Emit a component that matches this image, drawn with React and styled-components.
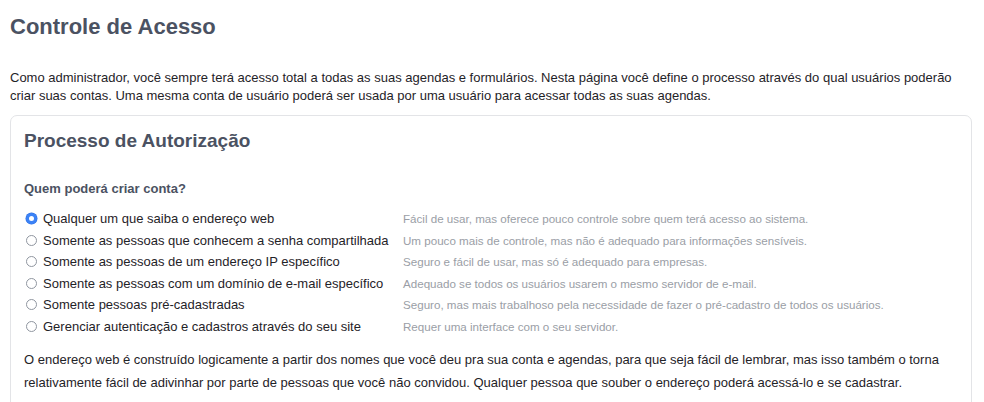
import React from "react";
import styled, { createGlobalStyle } from "styled-components";

const Global = createGlobalStyle`
  html, body { margin: 0; padding: 0; background: #fff; }
  body {
    font-family: "Liberation Sans", Arial, sans-serif;
    color: #1f2328;
    -webkit-font-smoothing: antialiased;
  }
`;

const Page = styled.div`
  padding: 10px 10px 0 10px;
`;

const Title = styled.h1`
  margin: 2px 0 0 0;
  font-size: 22px;
  line-height: 30px;
  font-weight: 700;
  color: #4b5262;
`;

const Intro = styled.p`
  margin: 27px 0 0 0;
  font-size: 13px;
  line-height: 18px;
  color: #1f2328;
`;

const Card = styled.section`
  margin-top: 10px;
  width: 962px;
  box-sizing: border-box;
  border: 1px solid #e3e4e7;
  border-radius: 7px;
  padding: 12px 13px 20px 13px;
`;

const CardTitle = styled.h2`
  margin: 0;
  font-size: 19px;
  line-height: 26px;
  font-weight: 700;
  color: #4b5262;
`;

const Question = styled.h3`
  margin: 26px 0 0 0;
  font-size: 13px;
  line-height: 18px;
  font-weight: 700;
  color: #4b5262;
`;

const Options = styled.div`
  margin-top: 10px;
  display: grid;
  grid-template-columns: 379px 1fr;
`;

const OptionLabel = styled.label`
  display: flex;
  align-items: center;
  gap: 6px;
  height: 21.5px;
  padding-left: 2px;
  font-size: 13px;
  white-space: nowrap;
  color: #1f2328;
  cursor: pointer;
`;

const Radio = styled.span`
  box-sizing: border-box;
  width: 11px;
  height: 11px;
  border-radius: 50%;
  flex: 0 0 auto;
  border: ${(p) => (p.$checked ? "3px solid #3b82f6" : "1px solid #9096a0")};
  background: #fff;
  box-shadow: ${(p) => (p.$checked ? "0 0 0 0.5px #2f6fe0" : "none")};
`;

const Hint = styled.span`
  display: flex;
  align-items: center;
  height: 21.5px;
  font-size: 11.6px;
  white-space: nowrap;
  color: #9a9ea6;
`;

const Note = styled.p`
  margin: 11px 0 0 0;
  font-size: 13px;
  line-height: 23px;
  color: #1f2328;
`;

const options = [
  ["Qualquer um que saiba o endereço web", "Fácil de usar, mas oferece pouco controle sobre quem terá acesso ao sistema."],
  ["Somente as pessoas que conhecem a senha compartilhada", "Um pouco mais de controle, mas não é adequado para informações sensíveis."],
  ["Somente as pessoas de um endereço IP específico", "Seguro e fácil de usar, mas só é adequado para empresas."],
  ["Somente as pessoas com um domínio de e-mail específico", "Adequado se todos os usuários usarem o mesmo servidor de e-mail."],
  ["Somente pessoas pré-cadastradas", "Seguro, mas mais trabalhoso pela necessidade de fazer o pré-cadastro de todos os usuários."],
  ["Gerenciar autenticação e cadastros através do seu site", "Requer uma interface com o seu servidor."],
];

export default function App() {
  const [sel, setSel] = React.useState(0);
  return (
    <>
      <Global />
      <Page>
        <Title>Controle de Acesso</Title>
        <Intro>
          Como administrador, você sempre terá acesso total a todas as suas agendas e formulários. Nesta página você define o processo através do qual usuários poderão criar suas contas. Uma mesma conta de usuário poderá ser usada por uma usuário para acessar todas as suas agendas.
        </Intro>
        <Card>
          <CardTitle>Processo de Autorização</CardTitle>
          <Question>Quem poderá criar conta?</Question>
          <Options>
            {options.map(([label, hint], i) => (
              <React.Fragment key={i}>
                <OptionLabel onClick={() => setSel(i)}>
                  <Radio $checked={sel === i} />
                  {label}
                </OptionLabel>
                <Hint>{hint}</Hint>
              </React.Fragment>
            ))}
          </Options>
          <Note>
            O endereço web é construído logicamente a partir dos nomes que você deu pra sua conta e agendas, para que seja fácil de lembrar, mas isso também o torna relativamente fácil de adivinhar por parte de pessoas que você não convidou. Qualquer pessoa que souber o endereço poderá acessá-lo e se cadastrar.
          </Note>
        </Card>
      </Page>
    </>
  );
}
